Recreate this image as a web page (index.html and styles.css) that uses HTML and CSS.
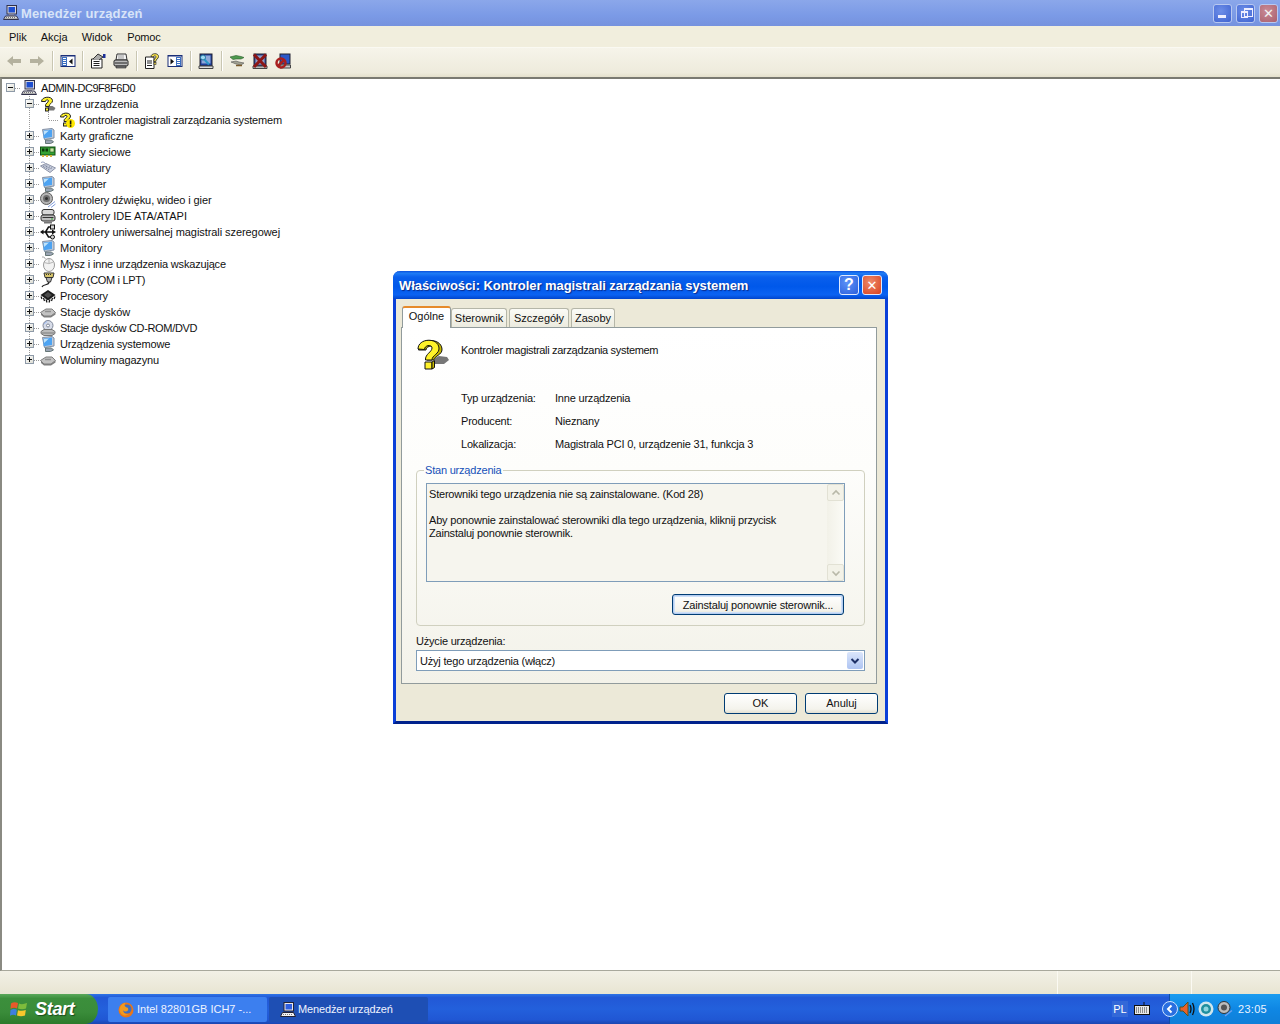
FILE: index.html
```html
<!DOCTYPE html>
<html lang="pl">
<head>
<meta charset="utf-8">
<title>Menedżer urządzeń</title>
<link rel="stylesheet" href="styles.css">
</head>
<body>
<svg class="defs" width="0" height="0">
  <symbol id="i-pc" viewBox="0 0 16 16"><rect x="4" y="0.5" width="9.5" height="8.5" fill="#d8d8e0" stroke="#30304a"/><rect x="5.5" y="2" width="6.5" height="5.5" fill="#1f4fd0"/><path d="M6 9.5h5v1.5H6z" fill="#9a9aa8"/><path d="M2.5 11h11l2 3.5H.5z" fill="#e4e4e4" stroke="#30304a"/><path d="M3 12.5h10M2.5 13.5h11" stroke="#777" stroke-dasharray="1 1"/></symbol>
  <symbol id="i-q" viewBox="0 0 16 16"><path d="M7 14.500h7l1.500-2.500-3-2H8z" fill="#777"/><path d="M1.500 5.500C1.500 .5 12 -.5 12.500 4.500 12.800 7.500 9 7.500 9 10.500H5.500C5 7 8.500 6.500 8.500 4.800 8.500 3.500 5.500 3.500 5.500 5.500Z" fill="#fff22a" stroke="#222"/><rect x="5.500" y="12" width="3" height="3" fill="#fff22a" stroke="#222"/></symbol>
  <symbol id="i-qw" viewBox="0 0 16 16"><path d="M1.500 5C1.500 .5 11 -.5 11.500 4 11.800 7 8 7 8 9.500H5C4.500 6.500 8 6 8 4.300 8 3 5 3 5 5Z" fill="#fff22a" stroke="#222"/><rect x="4.500" y="11" width="3" height="3" fill="#fff22a" stroke="#222"/><circle cx="11.500" cy="11.500" r="4.500" fill="#ffe800"/><rect x="10.800" y="8.500" width="1.600" height="4" fill="#111"/><rect x="10.800" y="13.200" width="1.600" height="1.600" fill="#111"/></symbol>
  <symbol id="i-mon" viewBox="0 0 16 16"><path d="M2.500 1.500 12 .5 14 2v8l-9.500 1.500z" fill="#c4ccd8" stroke="#7f8ea4"/><path d="M3.500 2.500 12 1.500V9L3.500 10.300z" fill="#4da3f2"/><path d="M4 3 9 2.500 4 7z" fill="#bfe3fb"/><path d="M5.500 12h6l2 2-3 1.500H5.500z" fill="#9aa4b4" stroke="#677"/></symbol>
  <symbol id="i-net" viewBox="0 0 16 16"><rect x="0.500" y="3" width="14.500" height="8" fill="#35a235" stroke="#124f12"/><rect x="2" y="4.500" width="2.500" height="3" fill="#0c3a0c"/><rect x="5.500" y="4.500" width="2.500" height="3" fill="#0c3a0c"/><rect x="10" y="4" width="4" height="4" fill="#c9e6a4" stroke="#124f12" stroke-width=".6"/><path d="M2 11v2h2v-2M6 11v2h2v-2M10 11v2h2v-2" fill="#d9b13a"/></symbol>
  <symbol id="i-kbd" viewBox="0 0 16 16"><path d="M.5 6 6 3.500 15.500 8 10 12.500z" fill="#c9cfde" stroke="#8d94a8"/><path d="M3 6.500 6.500 5M4.500 7.500 8 6M6 8.500 10 6.800M8 9.500 12 7.800" stroke="#6f7890" stroke-dasharray="1 .7"/><path d="M1 2.500Q3 1 5 3" fill="none" stroke="#9aa4c0"/></symbol>
  <symbol id="i-snd" viewBox="0 0 16 16"><circle cx="6.500" cy="6.500" r="6" fill="#b5b5b5" stroke="#5c5c5c"/><circle cx="6.500" cy="6.500" r="3.500" fill="#6e6e6e"/><circle cx="6.500" cy="6.500" r="1.500" fill="#2e2e2e"/><path d="M8 15 15 9.500M11 15.500 15.500 12" stroke="#7f9cdb"/></symbol>
  <symbol id="i-ide" viewBox="0 0 16 16"><rect x="2" y="1.500" width="12" height="5.500" rx="2" fill="#d8d8d8" stroke="#333"/><rect x="1" y="7" width="14" height="6" rx="2" fill="#bdbdbd" stroke="#333"/><path d="M2.500 9.500h11" stroke="#333"/><path d="M4 14.500h8" stroke="#777" stroke-width="2"/><rect x="11" y="10.500" width="2" height="1" fill="#3a3"/></symbol>
  <symbol id="i-usb" viewBox="0 0 16 16"><path d="M2 8h11M5.500 8 8.500 3h3M5.500 8l3 5h3" fill="none" stroke="#111" stroke-width="1.500"/><path d="M0 8 3.500 5.500v5z" fill="#111"/><rect x="10.500" y="1" width="4" height="4" fill="#d5d5d5" stroke="#111"/><circle cx="12.500" cy="13" r="2" fill="#d5d5d5" stroke="#111"/><path d="M12 5.500 16 8 12 10.500z" fill="#111"/></symbol>
  <symbol id="i-mouse" viewBox="0 0 16 16"><path d="M2 1Q4 0 5.500 3" fill="none" stroke="#a8a8a8"/><ellipse cx="9" cy="9" rx="5.500" ry="6.500" fill="#f2f2f2" stroke="#9a9a9a"/><path d="M4 6.500Q9 9 13.500 6" fill="none" stroke="#b5b5b5"/><path d="M9 3v4.500" stroke="#b5b5b5"/></symbol>
  <symbol id="i-port" viewBox="0 0 16 16"><path d="M4 1h10l-1 4.500H5z" fill="#d8c66a" stroke="#333"/><path d="M6 5.500h6L10.500 10h-3z" fill="#b0b0b0" stroke="#333"/><path d="M9 10c0 4-6 1.500-7 5" fill="none" stroke="#222" stroke-width="1.200"/><path d="M6 2.500h6" stroke="#333" stroke-dasharray="1 1"/></symbol>
  <symbol id="i-cpu" viewBox="0 0 16 16"><path d="M8 2 15.500 7 8 12.500.5 7z" fill="#1c1c1c"/><path d="M8 4 12 7 8 10 4 7z" fill="#4c4c4c"/><path d="M1 8.500 2 11M3.500 10 4.500 13M6 11.500 7 14.500M10 11.500 9 14.500M12.500 10 11.500 13M15 8.500 14 11" stroke="#111" stroke-width="1.200"/></symbol>
  <symbol id="i-drv" viewBox="0 0 16 16"><path d="M.5 8.500 6 5h6l3.500 3.500L11 12H4z" fill="#c2c2c2" stroke="#7c7c7c"/><path d="M1 9 4 12h7l4.500-3.500v2L11 13.500H4L1 11z" fill="#7e7e7e"/><path d="M5 7.500h6" stroke="#909090" stroke-width="1.500"/></symbol>
  <symbol id="i-cd" viewBox="0 0 16 16"><circle cx="8" cy="5.500" r="5" fill="#d7dce8" stroke="#7f8799"/><circle cx="8" cy="5.500" r="1.500" fill="#fff" stroke="#7f8799"/><path d="M4 4 7 1.500" stroke="#9ab8f0"/><path d="M1 11.500 4 9.500h8l3 2v2l-3 2H4l-3-2z" fill="#bcbcbc" stroke="#777"/><path d="M1.500 13h13" stroke="#7c7c7c"/></symbol>
  <symbol id="t-back" viewBox="0 0 16 16"><path d="M1 8 7 3v3h8v4H7v3z" fill="#b4b19e"/></symbol>
  <symbol id="t-fwd" viewBox="0 0 16 16"><path d="M15 8 9 3v3H1v4h8v3z" fill="#b4b19e"/></symbol>
  <symbol id="t-tree" viewBox="0 0 16 16"><rect x="1" y="2.500" width="14" height="11" fill="#fff" stroke="#1b2f78"/><rect x="1" y="2" width="14" height="1.500" fill="#1b2f78"/><rect x="2" y="4" width="5" height="9" fill="#3b6fc0"/><path d="M3 5.500h3M3 7.500h3M3 9.500h3M3 11.500h3" stroke="#fff"/><path d="M12.500 5.500v6L9 8.500z" fill="#111"/></symbol>
  <symbol id="t-prop" viewBox="0 0 16 16"><path d="M1.500 6h10.500v9H1.500z" fill="#fff" stroke="#222"/><path d="M3.500 8.500h6M3.500 10.500h6M3.500 12.500h6" stroke="#222"/><path d="M3 6 8 1l5 3-4 3" fill="#aaa" stroke="#333"/><rect x="13" y="1" width="2.500" height="4" fill="#1b2f98"/></symbol>
  <symbol id="t-print" viewBox="0 0 16 16"><path d="M4 1h9l1 6H3z" fill="#f4f4f4" stroke="#333"/><path d="M5 3h6M5 5h6" stroke="#999"/><path d="M1 8q0-1 2-1h10q2 0 2 1v4q0 1-2 1H3q-2 0-2-1z" fill="#bbb" stroke="#222"/><path d="M2 10h12" stroke="#222"/><path d="M3 13h10v2H3z" fill="#777" stroke="#222" stroke-width=".6"/></symbol>
  <symbol id="t-help" viewBox="0 0 16 16"><path d="M1.500 4h8.500v11.500h-8.500z" fill="#fff" stroke="#222"/><path d="M3 8h5M3 10h5M3 12.500h5" stroke="#222"/><path d="M7 3.500C7 0 14.500-.5 14.500 3.500 14.500 6 11.800 6 11.800 8.500H9.800C9.500 6 12 5.500 12 3.800 12 2.500 9.500 2.500 9.500 4Z" fill="#ffe84a" stroke="#222" stroke-width=".8"/><rect x="10" y="9.500" width="2" height="2" fill="#ffe84a" stroke="#222" stroke-width=".6"/></symbol>
  <symbol id="t-panel" viewBox="0 0 16 16"><rect x="1" y="2.500" width="14" height="11" fill="#fff" stroke="#1b2f78"/><rect x="1" y="2" width="14" height="1.500" fill="#1b2f78"/><rect x="9" y="4" width="5" height="9" fill="#3b6fc0"/><path d="M10 5.500h3M10 7.500h3M10 9.500h3M10 11.500h3" stroke="#fff"/><path d="M3.500 5.500v6L7 8.500z" fill="#111"/></symbol>
  <symbol id="t-scan" viewBox="0 0 16 16"><rect x="2" y="1" width="12" height="12" fill="#1f3f9c" stroke="#223"/><rect x="3.500" y="2.500" width="9" height="8" fill="#8fa8d8"/><path d="M1 13h14v2.500H1z" fill="#ddd" stroke="#444"/><circle cx="5" cy="4.500" r="2.500" fill="#9fd9f2" stroke="#1a6f9a"/><path d="M6.500 6.500 11 11.500" stroke="#2a98c8" stroke-width="2"/></symbol>
  <symbol id="t-plug" viewBox="0 0 16 16"><path d="M1 4 7 2.500l5 1 3 1-3 1.500-5 0-3 .5z" fill="#4e9a4e" stroke="#2b5c2b" stroke-width=".6"/><path d="M15 10l-5-1-3-1-5 1 5 2 5 1z" fill="#a2a292" stroke="#555" stroke-width=".6"/><path d="M7 12.500h6" stroke="#7a5a2a" stroke-width="1.500"/></symbol>
  <symbol id="t-x" viewBox="0 0 16 16"><rect x="2" y="1" width="12" height="12" fill="#2a3f8c" stroke="#223"/><rect x="3.500" y="2.500" width="9" height="9" fill="#8fa0c8"/><path d="M1 13h14v2.500H1z" fill="#bbb" stroke="#444"/><path d="M2 1.500 14 14M14 1.500 2 14" stroke="#8c1616" stroke-width="3"/></symbol>
  <symbol id="t-off" viewBox="0 0 16 16"><rect x="5" y="1" width="10" height="10" fill="#2b58c8" stroke="#223"/><path d="M5 12h10.500v3H5z" fill="#ccc" stroke="#444"/><circle cx="6" cy="10" r="4.500" fill="none" stroke="#a81f1f" stroke-width="2.500"/><path d="M3 13 9 7" stroke="#a81f1f" stroke-width="2.500"/></symbol>
  <symbol id="i-bigq" viewBox="0 0 32 32"><path d="M17 25h10l5-4-2-3-8-1-4 2z" fill="#777"/><path d="M1.500 11C1.500 -1 24 -2 25 10 25.500 16 17 17 17 21H10C9.500 15 17 13 17 9.500 17 6 9 6.500 9 11Z" fill="#c8b800" stroke="#111"/><path d="M1 10C1 -1 21 -2 22 9 22.500 15 15 16 15 21H8.500C8 15 15 13 15 9 15 5 7.500 6 7.500 10.500Z" fill="#fff22a" stroke="#111"/><path d="M8 23h7v7H8z" fill="#fff22a" stroke="#111"/><path d="M15 23l2.500-1.500v7L15 30z" fill="#c8b800" stroke="#111"/></symbol>
  <symbol id="i-ff" viewBox="0 0 16 16"><circle cx="8" cy="8" r="7.500" fill="#e8761a"/><circle cx="9" cy="7" r="4.500" fill="#3c6fc4"/><path d="M1.500 8C2 3 5 1 7.500 1 5.500 3 7 5 9 5.500 11 6 10.500 9.500 8 9.500 6.500 9.500 5.500 9 5 8 5 11 8 13 11 12 9 14 3 15 1.500 8Z" fill="#f29a1f"/></symbol>
  <symbol id="i-pcw" viewBox="0 0 16 16"><rect x="4" y="0.500" width="9.500" height="8.500" fill="#e8e8f0" stroke="#223"/><rect x="5.500" y="2" width="6.500" height="5.500" fill="#2e5fe0"/><path d="M2.500 10.500h11l2 4H.5z" fill="#f2f2f2" stroke="#223"/><path d="M3 12.500h10" stroke="#777" stroke-dasharray="1 1"/></symbol>
  <symbol id="i-flag" viewBox="0 0 18 18"><path d="M1 3.500Q4 1.500 8 3L7 8.500Q4 7 .5 8.800z" fill="#e8592b"/><path d="M9 3.500Q12 5 17 3L16 8.500Q12 10 8 8.500z" fill="#7ebc3c"/><path d="M.5 10Q4 8 6.800 9.800L6 15.500Q3 14 0 15.800z" fill="#3e7fe0"/><path d="M8 10.200Q12 11.500 15.800 10L15 15.500Q11 17 7 15.500z" fill="#f7c72c"/></symbol>
  <symbol id="i-tkbd" viewBox="0 0 16 16"><path d="M10 1v3" stroke="#111"/><rect x="0.500" y="4.500" width="15" height="9" fill="#e8e8e8" stroke="#111"/><path d="M2 7h12M2 9h12M2 11h12" stroke="#333" stroke-dasharray="1 1"/></symbol>
  <symbol id="i-tspk" viewBox="0 0 16 16"><path d="M1 6h3l5-5v14l-5-5H1z" fill="#e8612a" stroke="#552"/><path d="M11 4q2 4 0 8M13.500 2q3 6 0 12" fill="none" stroke="#111" stroke-width="1.300"/></symbol>
  <symbol id="i-tdisc" viewBox="0 0 16 16"><circle cx="8" cy="8" r="7.500" fill="#cfe6ee"/><circle cx="8" cy="8" r="5" fill="#1f8f9f"/><circle cx="8" cy="8" r="2.500" fill="#8fd6e0"/></symbol>
  <symbol id="i-tsnd" viewBox="0 0 16 16"><circle cx="7" cy="6.500" r="6" fill="#bdbdbd" stroke="#333"/><circle cx="7" cy="6.500" r="3" fill="#555"/><path d="M8 15 15 9.500" stroke="#6fa0ef" stroke-width="1.300"/></symbol>
</svg>

<div class="screen">
  <main class="window">
    <header class="titlebar">
      <svg class="ic"><use href="#i-pc"/></svg>
      <span class="title-text">Menedżer urządzeń</span>
      <div class="win-btns">
        <button class="wbtn"><span class="g-min"></span></button>
        <button class="wbtn"><span class="g-max"></span></button>
        <button class="wbtn wbtn-close"><span class="g-x">✕</span></button>
      </div>
    </header>
    <nav class="menubar">
      <span class="menu-item">Plik</span>
      <span class="menu-item">Akcja</span>
      <span class="menu-item">Widok</span>
      <span class="menu-item">Pomoc</span>
    </nav>
    <div class="toolbar">
      <span class="tb tb-first"><svg class="ic"><use href="#t-back"/></svg></span>
      <span class="tb"><svg class="ic"><use href="#t-fwd"/></svg></span>
      <span class="sep sep-a"></span>
      <span class="tb"><svg class="ic"><use href="#t-tree"/></svg></span>
      <span class="sep sep-b"></span>
      <span class="tb"><svg class="ic"><use href="#t-prop"/></svg></span>
      <span class="tb"><svg class="ic"><use href="#t-print"/></svg></span>
      <span class="sep sep-a"></span>
      <span class="tb"><svg class="ic"><use href="#t-help"/></svg></span>
      <span class="tb"><svg class="ic"><use href="#t-panel"/></svg></span>
      <span class="sep sep-a"></span>
      <span class="tb"><svg class="ic"><use href="#t-scan"/></svg></span>
      <span class="sep sep-a"></span>
      <span class="tb"><svg class="ic"><use href="#t-plug"/></svg></span>
      <span class="tb"><svg class="ic"><use href="#t-x"/></svg></span>
      <span class="tb"><svg class="ic"><use href="#t-off"/></svg></span>
    </div>
    <section class="tree">
      <div class="row root"><span class="exp"><i class="box"></i></span><svg class="ic"><use href="#i-pc"/></svg><span class="lbl ls4">ADMIN-DC9F8F6D0</span></div>
      <div class="row lv1 first"><span class="exp"><i class="box"></i></span><svg class="ic"><use href="#i-q"/></svg><span class="lbl">Inne urządzenia</span></div>
      <div class="row lv2"><span class="exp"></span><svg class="ic"><use href="#i-qw"/></svg><span class="lbl ls2">Kontroler magistrali zarządzania systemem</span></div>
      <div class="row lv1"><span class="exp"><i class="box plus"></i></span><svg class="ic"><use href="#i-mon"/></svg><span class="lbl">Karty graficzne</span></div>
      <div class="row lv1"><span class="exp"><i class="box plus"></i></span><svg class="ic"><use href="#i-net"/></svg><span class="lbl">Karty sieciowe</span></div>
      <div class="row lv1"><span class="exp"><i class="box plus"></i></span><svg class="ic"><use href="#i-kbd"/></svg><span class="lbl">Klawiatury</span></div>
      <div class="row lv1"><span class="exp"><i class="box plus"></i></span><svg class="ic"><use href="#i-mon"/></svg><span class="lbl ls2">Komputer</span></div>
      <div class="row lv1"><span class="exp"><i class="box plus"></i></span><svg class="ic"><use href="#i-snd"/></svg><span class="lbl ls1">Kontrolery dźwięku, wideo i gier</span></div>
      <div class="row lv1"><span class="exp"><i class="box plus"></i></span><svg class="ic"><use href="#i-ide"/></svg><span class="lbl">Kontrolery IDE ATA/ATAPI</span></div>
      <div class="row lv1"><span class="exp"><i class="box plus"></i></span><svg class="ic"><use href="#i-usb"/></svg><span class="lbl ls0">Kontrolery uniwersalnej magistrali szeregowej</span></div>
      <div class="row lv1"><span class="exp"><i class="box plus"></i></span><svg class="ic"><use href="#i-mon"/></svg><span class="lbl">Monitory</span></div>
      <div class="row lv1"><span class="exp"><i class="box plus"></i></span><svg class="ic"><use href="#i-mouse"/></svg><span class="lbl ls2">Mysz i inne urządzenia wskazujące</span></div>
      <div class="row lv1"><span class="exp"><i class="box plus"></i></span><svg class="ic"><use href="#i-port"/></svg><span class="lbl ls3">Porty (COM i LPT)</span></div>
      <div class="row lv1"><span class="exp"><i class="box plus"></i></span><svg class="ic"><use href="#i-cpu"/></svg><span class="lbl ls2">Procesory</span></div>
      <div class="row lv1"><span class="exp"><i class="box plus"></i></span><svg class="ic"><use href="#i-drv"/></svg><span class="lbl">Stacje dysków</span></div>
      <div class="row lv1"><span class="exp"><i class="box plus"></i></span><svg class="ic"><use href="#i-cd"/></svg><span class="lbl ls3">Stacje dysków CD-ROM/DVD</span></div>
      <div class="row lv1"><span class="exp"><i class="box plus"></i></span><svg class="ic"><use href="#i-mon"/></svg><span class="lbl ls2">Urządzenia systemowe</span></div>
      <div class="row lv1 last"><span class="exp"><i class="box plus"></i></span><svg class="ic"><use href="#i-drv"/></svg><span class="lbl ls2">Woluminy magazynu</span></div>
    </section>
    <footer class="statusbar">
      <span class="st st-main"></span>
      <span class="st st-mid"></span>
      <span class="st st-end"></span>
    </footer>
  </main>

  <div class="taskbar">
    <button class="start"><svg class="flag"><use href="#i-flag"/></svg><span>Start</span></button>
    <div class="tasks">
      <div class="task"><svg class="ic"><use href="#i-ff"/></svg><span>Intel 82801GB ICH7 -...</span></div>
      <div class="task task-active"><svg class="ic"><use href="#i-pcw"/></svg><span>Menedżer urządzeń</span></div>
    </div>
    <div class="lang"><span class="lang-box">PL</span><svg class="ic"><use href="#i-tkbd"/></svg></div>
    <div class="tray">
      <span class="chev"><svg viewBox="0 0 10 10" class="chev-g"><path d="M6.500 1.500 3 5l3.500 3.500" fill="none" stroke="#fff" stroke-width="2"/></svg></span>
      <svg class="ic"><use href="#i-tspk"/></svg>
      <svg class="ic"><use href="#i-tdisc"/></svg>
      <svg class="ic"><use href="#i-tsnd"/></svg>
      <span class="clock">23:05</span>
    </div>
  </div>

  <section class="dialog">
    <header class="dlg-title">
      <span class="dlg-title-text">Właściwości: Kontroler magistrali zarządzania systemem</span>
      <button class="dbtn">?</button>
      <button class="dbtn dbtn-close">✕</button>
    </header>
    <div class="dlg-body">
      <div class="tabs">
        <span class="tab tab-active">Ogólne</span>
        <span class="tab tab-2">Sterownik</span>
        <span class="tab tab-3">Szczegóły</span>
        <span class="tab tab-4">Zasoby</span>
      </div>
      <div class="panel">
        <div class="dev-head">
          <svg class="big"><use href="#i-bigq"/></svg>
          <span class="dev-name">Kontroler magistrali zarządzania systemem</span>
        </div>
        <dl class="props">
          <dt>Typ urządzenia:</dt><dd>Inne urządzenia</dd>
          <dt>Producent:</dt><dd>Nieznany</dd>
          <dt>Lokalizacja:</dt><dd>Magistrala PCI 0, urządzenie 31, funkcja 3</dd>
        </dl>
        <fieldset class="group">
          <legend>Stan urządzenia</legend>
          <div class="status-box">
            <div class="status-text">
              <p>Sterowniki tego urządzenia nie są zainstalowane. (Kod 28)</p>
              <p>Aby ponownie zainstalować sterowniki dla tego urządzenia, kliknij przycisk Zainstaluj ponownie sterownik.</p>
            </div>
            <div class="vscroll">
              <span class="sb-btn"><svg viewBox="0 0 10 10" class="sb-g"><path d="M1.500 6.500 5 3l3.500 3.500" fill="none" stroke="#b8b8a8" stroke-width="1.600"/></svg></span>
              <span class="sb-btn"><svg viewBox="0 0 10 10" class="sb-g"><path d="M1.500 3.500 5 7l3.500-3.500" fill="none" stroke="#b8b8a8" stroke-width="1.600"/></svg></span>
            </div>
          </div>
          <button class="btn btn-default btn-reinstall">Zainstaluj ponownie sterownik...</button>
        </fieldset>
        <label class="use-label">Użycie urządzenia:</label>
        <div class="combo">
          <span>Użyj tego urządzenia (włącz)</span>
          <span class="combo-btn"><svg viewBox="0 0 10 10" class="combo-g"><path d="M1.500 3 5 6.500 8.500 3" fill="none" stroke="#1d2f66" stroke-width="2"/></svg></span>
        </div>
      </div>
      <div class="dlg-actions">
        <button class="btn btn-act">OK</button>
        <button class="btn btn-act">Anuluj</button>
      </div>
    </div>
  </section>
</div>
</body>
</html>
```

FILE: styles.css
```css
* { box-sizing: border-box; }
html, body { margin: 0; padding: 0; }
body { font: 11px/13px "Liberation Sans", Arial, sans-serif; color: #111; background: #ece9d8; overflow: hidden; }
.defs { position: absolute; }
.screen { position: relative; width: 1280px; height: 1024px; display: flex; flex-direction: column; overflow: hidden; }
.ic { width: 16px; height: 16px; flex: none; display: block; }
button { font: inherit; color: inherit; padding: 0; }

.window { flex: none; height: 994px; display: flex; flex-direction: column; }
.titlebar { flex: none; height: 26px; display: flex; align-items: center; padding-left: 3px; background: linear-gradient(180deg, #8ba7ea 0%, #7b9ae6 60%, #7692de 100%); }
.title-text { margin-left: 2px; font: bold 13px "Liberation Sans", sans-serif; letter-spacing: .1px; color: #d8e4f8; }
.win-btns { margin-left: auto; display: flex; gap: 4px; padding-right: 2px; }
.wbtn { width: 19px; height: 19px; display: flex; align-items: center; justify-content: center; border: 1px solid #b8c8f0; border-radius: 3px; background: radial-gradient(circle at 40% 35%, #6d8ee8, #3f63d0); color: #fff; position: relative; }
.wbtn-close { background: radial-gradient(circle at 40% 35%, #c98a96, #a9606e); }
.g-min { width: 8px; height: 3px; background: #eef; margin-top: 7px; margin-right: 2px; }
.g-max { position: relative; width: 7px; height: 7px; margin: 3px 3px 0 0; border: 1px solid #eef; border-top-width: 2px; }
.g-max::before { content: ""; position: absolute; left: 2px; top: -5px; width: 7px; height: 6px; border: 1px solid #eef; border-top-width: 2px; }
.g-x { font: bold 13px/1 "DejaVu Sans", sans-serif; color: #f2f2f2; }

.menubar { flex: none; height: 22px; display: flex; align-items: center; background: #f1eedd; border-bottom: 1px solid #faf9f2; padding: 2px 0 0 3px; }
.menu-item { padding: 0 6px; margin-right: 3px; }
.menu-item:first-child { margin-right: 2px; }
.menu-item:nth-child(2) { margin-right: 2px; }
.menu-item:last-child { margin-right: 0; letter-spacing: -.15px; }

.toolbar { flex: none; height: 29px; display: flex; align-items: center; background: linear-gradient(180deg, #f6f4ea, #eeebdc 85%, #e4e0cc); padding-bottom: 3px; }
.tb { width: 23px; height: 22px; display: flex; align-items: center; justify-content: center; }
.tb-first { margin-left: 2px; }
.sep { width: 2px; height: 20px; border-left: 1px solid #c9c6b2; border-right: 1px solid #fff; }
.sep-a { margin: 0 2px 0 4px; }
.sep-b { margin: 0 2px 0 3px; }

.tree { flex: 1; background: #fff; border-top: 2px solid #7a7a72; border-left: 2px solid #8a8a82; border-bottom: 1px solid #a8a89c; padding-top: 1px; }
.row { position: relative; height: 16px; display: flex; align-items: center; }
.root { padding-left: 0; }
.lv1 { padding-left: 19px; }
.lv2 { padding-left: 38px; }
.lbl { margin-left: 4px; white-space: nowrap; }
.ls0 { letter-spacing: -.07px; }
.ls1 { letter-spacing: -.1px; }
.ls2 { letter-spacing: -.18px; }
.ls3 { letter-spacing: -.32px; }
.ls4 { letter-spacing: -.45px; }
.exp { position: relative; flex: none; width: 19px; height: 16px; }
.box { position: absolute; left: 4px; top: 3px; width: 9px; height: 9px; border: 1px solid #8e9aa8; background: linear-gradient(135deg, #fff, #dcdcd2); z-index: 1; }
.box::before { content: ""; position: absolute; left: 1px; top: 3px; width: 5px; height: 1px; background: #111; }
.plus::after { content: ""; position: absolute; left: 3px; top: 1px; width: 1px; height: 5px; background: #111; }
.root .exp::after, .lv1 .exp::after { content: ""; position: absolute; left: 13px; top: 8px; width: 6px; height: 1px; background: repeating-linear-gradient(90deg, #9a9a9a 0 1px, transparent 1px 2px); }
.lv1 .exp::before { content: ""; position: absolute; left: 8px; top: 0; width: 1px; height: 16px; background: repeating-linear-gradient(180deg, #9a9a9a 0 1px, transparent 1px 2px); }
.lv1.last .exp::before { height: 8px; }
.lv2::before { content: ""; position: absolute; left: 27px; top: 0; width: 1px; height: 16px; background: repeating-linear-gradient(180deg, #9a9a9a 0 1px, transparent 1px 2px); }
.lv2 .exp::before { content: ""; position: absolute; left: 8px; top: 0; width: 1px; height: 8px; background: repeating-linear-gradient(180deg, #9a9a9a 0 1px, transparent 1px 2px); }
.lv2 .exp::after { content: ""; position: absolute; left: 9px; top: 8px; width: 10px; height: 1px; background: repeating-linear-gradient(90deg, #9a9a9a 0 1px, transparent 1px 2px); }

.statusbar { flex: none; height: 23px; display: flex; background: linear-gradient(180deg, #f2f0e6, #e8e5d2); }
.st { display: block; height: 100%; border-right: 1px solid #fbfaf3; }
.st-main { width: 1058px; }
.st-mid { width: 134px; }
.st-end { flex: 1; border-right: 0; }

.taskbar { flex: none; height: 30px; display: flex; align-items: stretch; color: #fff; background: linear-gradient(180deg, #2e74e6 0, #2258d6 12%, #2360dc 50%, #2057d4 85%, #1a46b0 100%); }
.start { flex: none; width: 98px; height: 30px; display: flex; align-items: center; border: 0; padding-left: 10px; border-radius: 0 12px 12px 0 / 0 15px 15px 0; background: linear-gradient(180deg, #5aa85a 0, #3c8f3c 15%, #3a8c3a 60%, #2c7a2c 100%); font: italic bold 18px "Liberation Sans", sans-serif; letter-spacing: -.3px; color: #fff; text-shadow: 1px 1px 1px #1c4c1c; }
.flag { width: 18px; height: 18px; margin-right: 7px; flex: none; }
.tasks { flex: none; display: flex; gap: 2px; margin-left: 10px; padding: 3px 0 2px; }
.task { width: 159px; display: flex; align-items: center; gap: 3px; padding-left: 10px; border-radius: 2px; background: #3c7fef; color: #eef3ff; white-space: nowrap; }
.task-active { background: #1e4fb4; padding-left: 11px; gap: 2px; letter-spacing: -.15px; }
.lang { flex: none; display: flex; align-items: center; margin-left: 684px; }
.lang-box { width: 16px; height: 16px; display: flex; align-items: center; justify-content: center; margin-right: 6px; background: #3368d8; }
.tray { flex: 1; margin-left: 19px; display: flex; align-items: center; gap: 3px; background: linear-gradient(180deg, #1b9cf0, #0f87e4 50%, #0f7fd8); border-left: 1px solid #0d4fa8; position: relative; }
.chev { width: 16px; height: 16px; margin: 0 -2px 0 -8px; border-radius: 50%; border: 1px solid #cfe4ff; background: #2a6fe0; display: flex; align-items: center; justify-content: center; flex: none; }
.chev-g { width: 10px; height: 10px; display: block; }
.clock { margin-left: 2px; letter-spacing: .3px; color: #eaf4ff; }

.dialog { position: absolute; left: 393px; top: 271px; width: 495px; height: 453px; display: flex; flex-direction: column; border: 3px solid #0a3fd8; border-top: 0; border-bottom-color: #00228c; border-radius: 7px 7px 0 0; background: #ece9d8; }
.dlg-title { flex: none; height: 28px; margin: 0 -3px; display: flex; align-items: center; padding: 0 6px 0 6px; gap: 3px; border-radius: 7px 7px 0 0; background: linear-gradient(180deg, #0a4fdc 0, #1f7cf5 8%, #0a5fec 22%, #0058ea 55%, #0a62f2 85%, #0044cc 100%); }
.dlg-title-text { flex: 1; padding-top: 1px; font: bold 13px "Liberation Sans", sans-serif; letter-spacing: -.06px; color: #fff; text-shadow: 1px 1px 1px #0a2a88; white-space: nowrap; }
.dbtn { width: 20px; height: 20px; border: 1px solid #dfe9ff; border-radius: 3px; background: radial-gradient(circle at 40% 35%, #5d92f8, #2a5fdc); color: #fff; font: bold 16px/1 "Liberation Sans", sans-serif; display: flex; align-items: center; justify-content: center; }
.dbtn-close { background: radial-gradient(circle at 40% 35%, #ee8a6a, #d8411f); font: bold 13px/1 "DejaVu Sans", sans-serif; }
.dlg-body { flex: 1; display: flex; flex-direction: column; padding: 7px 8px 0 5px; min-height: 0; }

.tabs { flex: none; height: 22px; display: flex; align-items: flex-end; padding-left: 1px; position: relative; z-index: 1; margin-bottom: -1px; }
.tab { height: 19px; margin-bottom: 1px; padding-top: 3px; text-align: center; border: 1px solid #b5b6a8; border-bottom: 0; border-radius: 3px 3px 0 0; background: linear-gradient(180deg, #fbfbf6, #ecebdf); white-space: nowrap; }
.tab-active { width: 49px; height: 22px; margin-bottom: 0; padding-top: 2px; background: #fff; border-color: #919b9c; border-top: 2px solid #e68b2c; }
.tab-2 { width: 56px; }
.tab-3 { width: 60px; margin-left: 2px; }
.tab-4 { width: 44px; margin-left: 2px; }

.panel { flex: none; width: 476px; height: 357px; display: flex; flex-direction: column; padding: 11px 12px 0 14px; border: 1px solid #919b9c; letter-spacing: -.2px; background: linear-gradient(180deg, #fff 0, #fdfdfb 40%, #f3f2e9 100%); }
.dev-head { flex: none; height: 32px; display: flex; align-items: flex-start; gap: 12px; padding-left: 1px; }
.big { width: 32px; height: 32px; flex: none; display: block; }
.dev-name { margin-top: 5px; letter-spacing: -.32px; }
.props { flex: none; margin: 16px 0 0; padding-left: 45px; display: grid; grid-template-columns: 94px 1fr; grid-auto-rows: 23px; align-items: center; }
.props dt, .props dd { margin: 0; }
.group { flex: none; width: 449px; height: 162px; margin: 8px 0 0; padding: 6px 20px 0 9px; border: 1px solid #d0d0bf; border-radius: 4px; display: flex; flex-direction: column; min-width: 0; }
.group legend { margin-left: -2px; padding: 0 1px; color: #1550b8; line-height: 13px; }
.status-box { flex: none; width: 419px; height: 99px; display: flex; border: 1px solid #7f9db9; background: #f6f5ee; }
.status-text { flex: 1; padding: 4px 3px 0 2px; }
.status-text p { margin: 0 0 13px; }
.vscroll { flex: none; width: 17px; display: flex; flex-direction: column; justify-content: space-between; background: linear-gradient(90deg, #f2f1e8, #fbfbf6); }
.sb-btn { width: 17px; height: 17px; display: flex; align-items: center; justify-content: center; border: 1px solid #e2e1d4; border-radius: 2px; background: #f3f2e8; }
.sb-g { width: 10px; height: 10px; display: block; }
.btn { height: 21px; border: 1px solid #003c74; border-radius: 3px; background: linear-gradient(180deg, #fff, #f4f3ec 80%, #e2e0d2); color: #111; }
.btn-default { box-shadow: inset 0 0 0 1px #b4cdf0, inset 0 0 0 2px #cfe0f8; }
.btn-reinstall { flex: none; width: 172px; margin: 12px 0 0 246px; padding-top: 1px; letter-spacing: -.17px; }
.use-label { flex: none; margin-top: 9px; }
.combo { flex: none; width: 449px; height: 21px; margin-top: 2px; display: flex; align-items: center; justify-content: space-between; padding: 1px 1px 0 3px; border: 1px solid #7f9db9; background: #fff; }
.combo-btn { width: 16px; height: 17px; margin-top: -1px; display: flex; align-items: center; justify-content: center; border-radius: 2px; background: linear-gradient(180deg, #dbe6fb, #aec4f2); }
.combo-g { width: 10px; height: 10px; display: block; }
.dlg-actions { flex: none; display: flex; justify-content: flex-end; gap: 8px; margin-top: 9px; margin-right: -1px; }
.btn-act { width: 73px; }
```
